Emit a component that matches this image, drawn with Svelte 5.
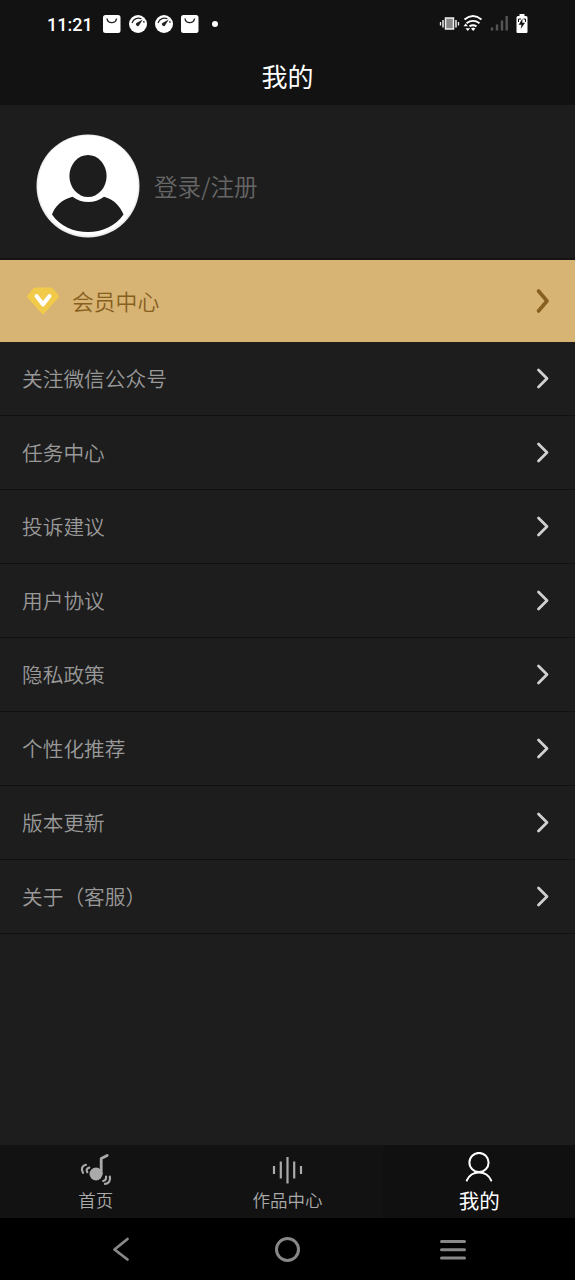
<script>
    const rows = [
        '关注微信公众号',
        '任务中心',
        '投诉建议',
        '用户协议',
        '隐私政策',
        '个性化推荐',
        '版本更新',
        '关于（客服）'
    ];
</script>

{#snippet bag()}
    <svg width="18" height="18" viewBox="0 0 18 18">
        <rect width="17.5" height="18" rx="2.5" fill="#fff" />
        <path d="M4 3.5a4.8 4.8 0 0 0 9.5 0" fill="none" stroke="#222" stroke-width="1.4" />
    </svg>
{/snippet}

{#snippet gauge()}
    <svg width="18" height="18" viewBox="0 0 18 18">
        <circle cx="9" cy="9" r="9" fill="#fff" />
        <path d="M3 8C4.500 3.500 9 2.200 12.400 3.800M14.600 6l.6 1.800" fill="none" stroke="#222" stroke-width="1.2" />
        <path d="M13.800 4.600 10.300 10a1.700 1.700 0 1 1-2.400-2.200z" fill="#222" />
    </svg>
{/snippet}

<div class="screen">
    <div class="status">
        <span class="time">11:21</span>
        <div class="notices">
            {@render bag()}
            {@render gauge()}
            {@render gauge()}
            {@render bag()}
            <i class="dot"></i>
        </div>
        <svg class="system" width="90" height="20" viewBox="0 0 90 20">
            <!-- vibrate -->
            <g stroke="#eee" fill="none">
                <rect x="6.500" y="4" width="8" height="11" fill="#888" stroke-width="1.5" />
                <path d="M4 6v7.500M17 6v7.500" stroke-width="1.5" />
                <path d="M1.500 8v3.500M19.500 8v3.500" stroke-width="1.3" />
            </g>
            <!-- wifi -->
            <g stroke="#fff" fill="none" stroke-width="1.9">
                <path d="M25.500 5.400q8.500-6.800 17 0" />
                <path d="M27.500 9.200q6.500-4.600 13 0" />
                <path d="M30.500 12.400q3.500-2.200 7 0" />
            </g>
            <path d="m32 14.600 2.200-1 2.200 1-2.200 2.400z" fill="#fff" />
            <path d="m24.500 12.200 2.200-2.800 2.200 2.800zM26.500 14.200h4.600l-2.300 2.800z" fill="#fff" />
            <!-- signal -->
            <path d="M53 16.500v-3M58 16.500v-6M63 16.500V6.500M67.700 16.500V2" stroke="#555" stroke-width="2.400" />
            <!-- battery -->
            <path d="M80.500 0h5v2H87a1.500 1.500 0 0 1 1.500 1.500V18a1 1 0 0 1-1 1h-9a1 1 0 0 1-1-1V3.500A1.500 1.500 0 0 1 79 2h1.500z" fill="#fff" />
            <path d="m83.500 4.500-3.800 6.300h2.800l-.8 4.200 4.300-6.300h-2.700z" fill="#111" />
            <path d="M79.500 8V5H82M84.500 5h2v3" fill="none" stroke="#111" />
        </svg>
    </div>

    <h1>我的</h1>

    <div class="profile">
        <svg width="104" height="104" viewBox="0 0 104 104">
            <circle cx="52" cy="52" r="51.500" fill="#eee" />
            <circle cx="52" cy="51.500" r="50" fill="#fff" />
            <ellipse cx="52" cy="42" rx="18.600" ry="21" fill="#1d1d1d" />
            <path d="M36.500 62.700C26 65.500 19 72 16 80.500c8 12 22 17.500 36 17.500s28-6 35.500-17.500C84 72 78 65.500 68 62.700c-9 7-22.500 7-31.500 0z" fill="#1d1d1d" />
        </svg>
        <span>登录/注册</span>
    </div>

    <div class="vip">
        <svg class="gem" width="34" height="28" viewBox="0 0 34 28">
            <path d="M9 2.500h16L31 9.500 17 25 3 9.500z" fill="#f1ca4a" stroke="#f1ca4a" stroke-width="4" stroke-linejoin="round" />
            <path d="m10.500 9 6.500 8.500L23.500 9" fill="none" stroke="#fff" stroke-width="4" stroke-linecap="round" stroke-linejoin="round" />
        </svg>
        <span>会员中心</span>
        <svg class="arrow" width="16" height="26" viewBox="0 0 16 26">
            <path d="m3.500 3 8.500 10-8.500 10" fill="none" stroke="#87601f" stroke-width="3.600" stroke-linecap="round" stroke-linejoin="round" />
        </svg>
    </div>

    <ul>
        {#each rows as row}
            <li>
                <span>{row}</span>
                <svg class="arrow" width="16" height="26" viewBox="0 0 16 26">
                    <path d="m3.500 5 8.500 8.500L3.500 22" fill="none" stroke="#d0d0d0" stroke-width="2.800" stroke-linecap="round" stroke-linejoin="round" />
                </svg>
            </li>
        {/each}
    </ul>

    <div class="tabs">
        <div class="tab">
            <svg width="36" height="34" viewBox="0 0 36 34">
                <circle cx="18" cy="22" r="6.500" fill="#aaa" />
                <g fill="none" stroke="#aaa" stroke-width="2.200" stroke-linecap="round" stroke-linejoin="round">
                    <path d="M23.200 22V6.500l6-3" stroke-width="2.800" />
                    <path d="M8 12.800c-4 1-5.300 4-3 8M11.300 15.600c-2.600.7-3.300 2.200-2 4.600" />
                    <path d="M31.800 24.500c1 4-1 7-4.800 7.300M28 24.500c.5 2.500-.500 3.800-2.800 4.500" />
                </g>
            </svg>
            <span>首页</span>
        </div>
        <div class="tab">
            <svg width="36" height="34" viewBox="0 0 36 34">
                <path d="M4 14v8M10.800 9.500v17M17.500 5v26.500M24.200 9.500v17M31 14v8" fill="none" stroke="#aaa" stroke-width="2.200" />
            </svg>
            <span>作品中心</span>
        </div>
        <div class="tab active">
            <svg width="36" height="34" viewBox="0 0 36 34">
                <g fill="none" stroke="#fff" stroke-width="2" stroke-linecap="round">
                    <circle cx="18" cy="10.500" r="9.600" />
                    <path d="M5.800 28.500C8 23.500 12.500 20.500 18 20.500s10 3 12.200 8" />
                </g>
            </svg>
            <span>我的</span>
        </div>
    </div>

    <div class="nav">
        <svg width="26" height="28" viewBox="0 0 26 28">
            <path d="M19.500 4 6.500 14.500l13 10" fill="none" stroke="#888" stroke-width="2.800" stroke-linecap="round" stroke-linejoin="round" />
        </svg>
        <svg width="26" height="28" viewBox="0 0 26 28">
            <circle cx="13.500" cy="14.500" r="11" fill="none" stroke="#888" stroke-width="3" />
        </svg>
        <svg width="26" height="28" viewBox="0 0 26 28">
            <path d="M1.500 6.500h23M1.500 14.800h23M1.500 23.100h23" stroke="#888" stroke-width="3" stroke-linecap="round" />
        </svg>
    </div>
</div>

<style>
    :global(body) {
        background: #1d1d1d;
    }

    .screen {
        width: 575px;
        height: 1280px;
        display: flex;
        flex-direction: column;
        background: #1d1d1d;
        font-family: "Noto Sans CJK SC", sans-serif;
        font-weight: 350;
        overflow: hidden;
    }

    svg {
        display: block;
        flex: none;
    }

    .status {
        height: 48px;
        box-sizing: border-box;
        padding: 0 46px 0 47px;
        display: flex;
        align-items: center;
        background: #121212;
    }

    .time {
        width: 56px;
        font: 500 18px Roboto, sans-serif;
        color: #fff;
    }

    .notices {
        display: flex;
        align-items: center;
        gap: 8px;
    }

    .dot {
        width: 6px;
        height: 6px;
        margin-left: 5px;
        border-radius: 50%;
        background: #fff;
    }

    .system {
        margin-left: auto;
    }

    h1 {
        height: 57px;
        margin: 0;
        background: #121212;
        color: #fff;
        font-size: 26px;
        font-weight: 400;
        line-height: 55px;
        text-align: center;
    }

    .profile {
        height: 155px;
        box-sizing: border-box;
        padding: 9px 36px 0;
        display: flex;
        align-items: center;
        gap: 14px;
        border-bottom: 2px solid #141414;
        color: #666;
        font-size: 23.6px;
    }

    .vip {
        height: 82px;
        box-sizing: border-box;
        padding: 0 24px 0 26px;
        display: flex;
        align-items: center;
        background: #d7b374;
        color: #87601f;
        font-size: 21.8px;
    }

    .vip span {
        padding-bottom: 2px;
    }

    .gem {
        margin-right: 12px;
    }

    .arrow {
        margin-left: auto;
    }

    ul {
        flex: 1;
        margin: 0;
        padding: 0;
        list-style: none;
    }

    li {
        height: 74px;
        box-sizing: border-box;
        padding: 0 24px 2px 22px;
        display: flex;
        align-items: center;
        border-bottom: 1px solid #111;
        color: #999;
        font-size: 20.7px;
    }

    .tabs {
        height: 73px;
        display: flex;
        background: #121212;
    }

    .tab {
        flex: 1;
        padding-top: 7px;
        color: #aaa;
        font-size: 17.5px;
        line-height: 26px;
        text-align: center;
    }

    .tab svg {
        margin: 0 auto 1px;
    }

    .active {
        background: #101010;
        color: #fff;
        font-size: 20.5px;
        font-weight: 400;
    }

    .nav {
        height: 62px;
        box-sizing: border-box;
        padding: 0 109px 0 108px;
        display: flex;
        align-items: center;
        justify-content: space-between;
        background: #000;
    }
</style>
